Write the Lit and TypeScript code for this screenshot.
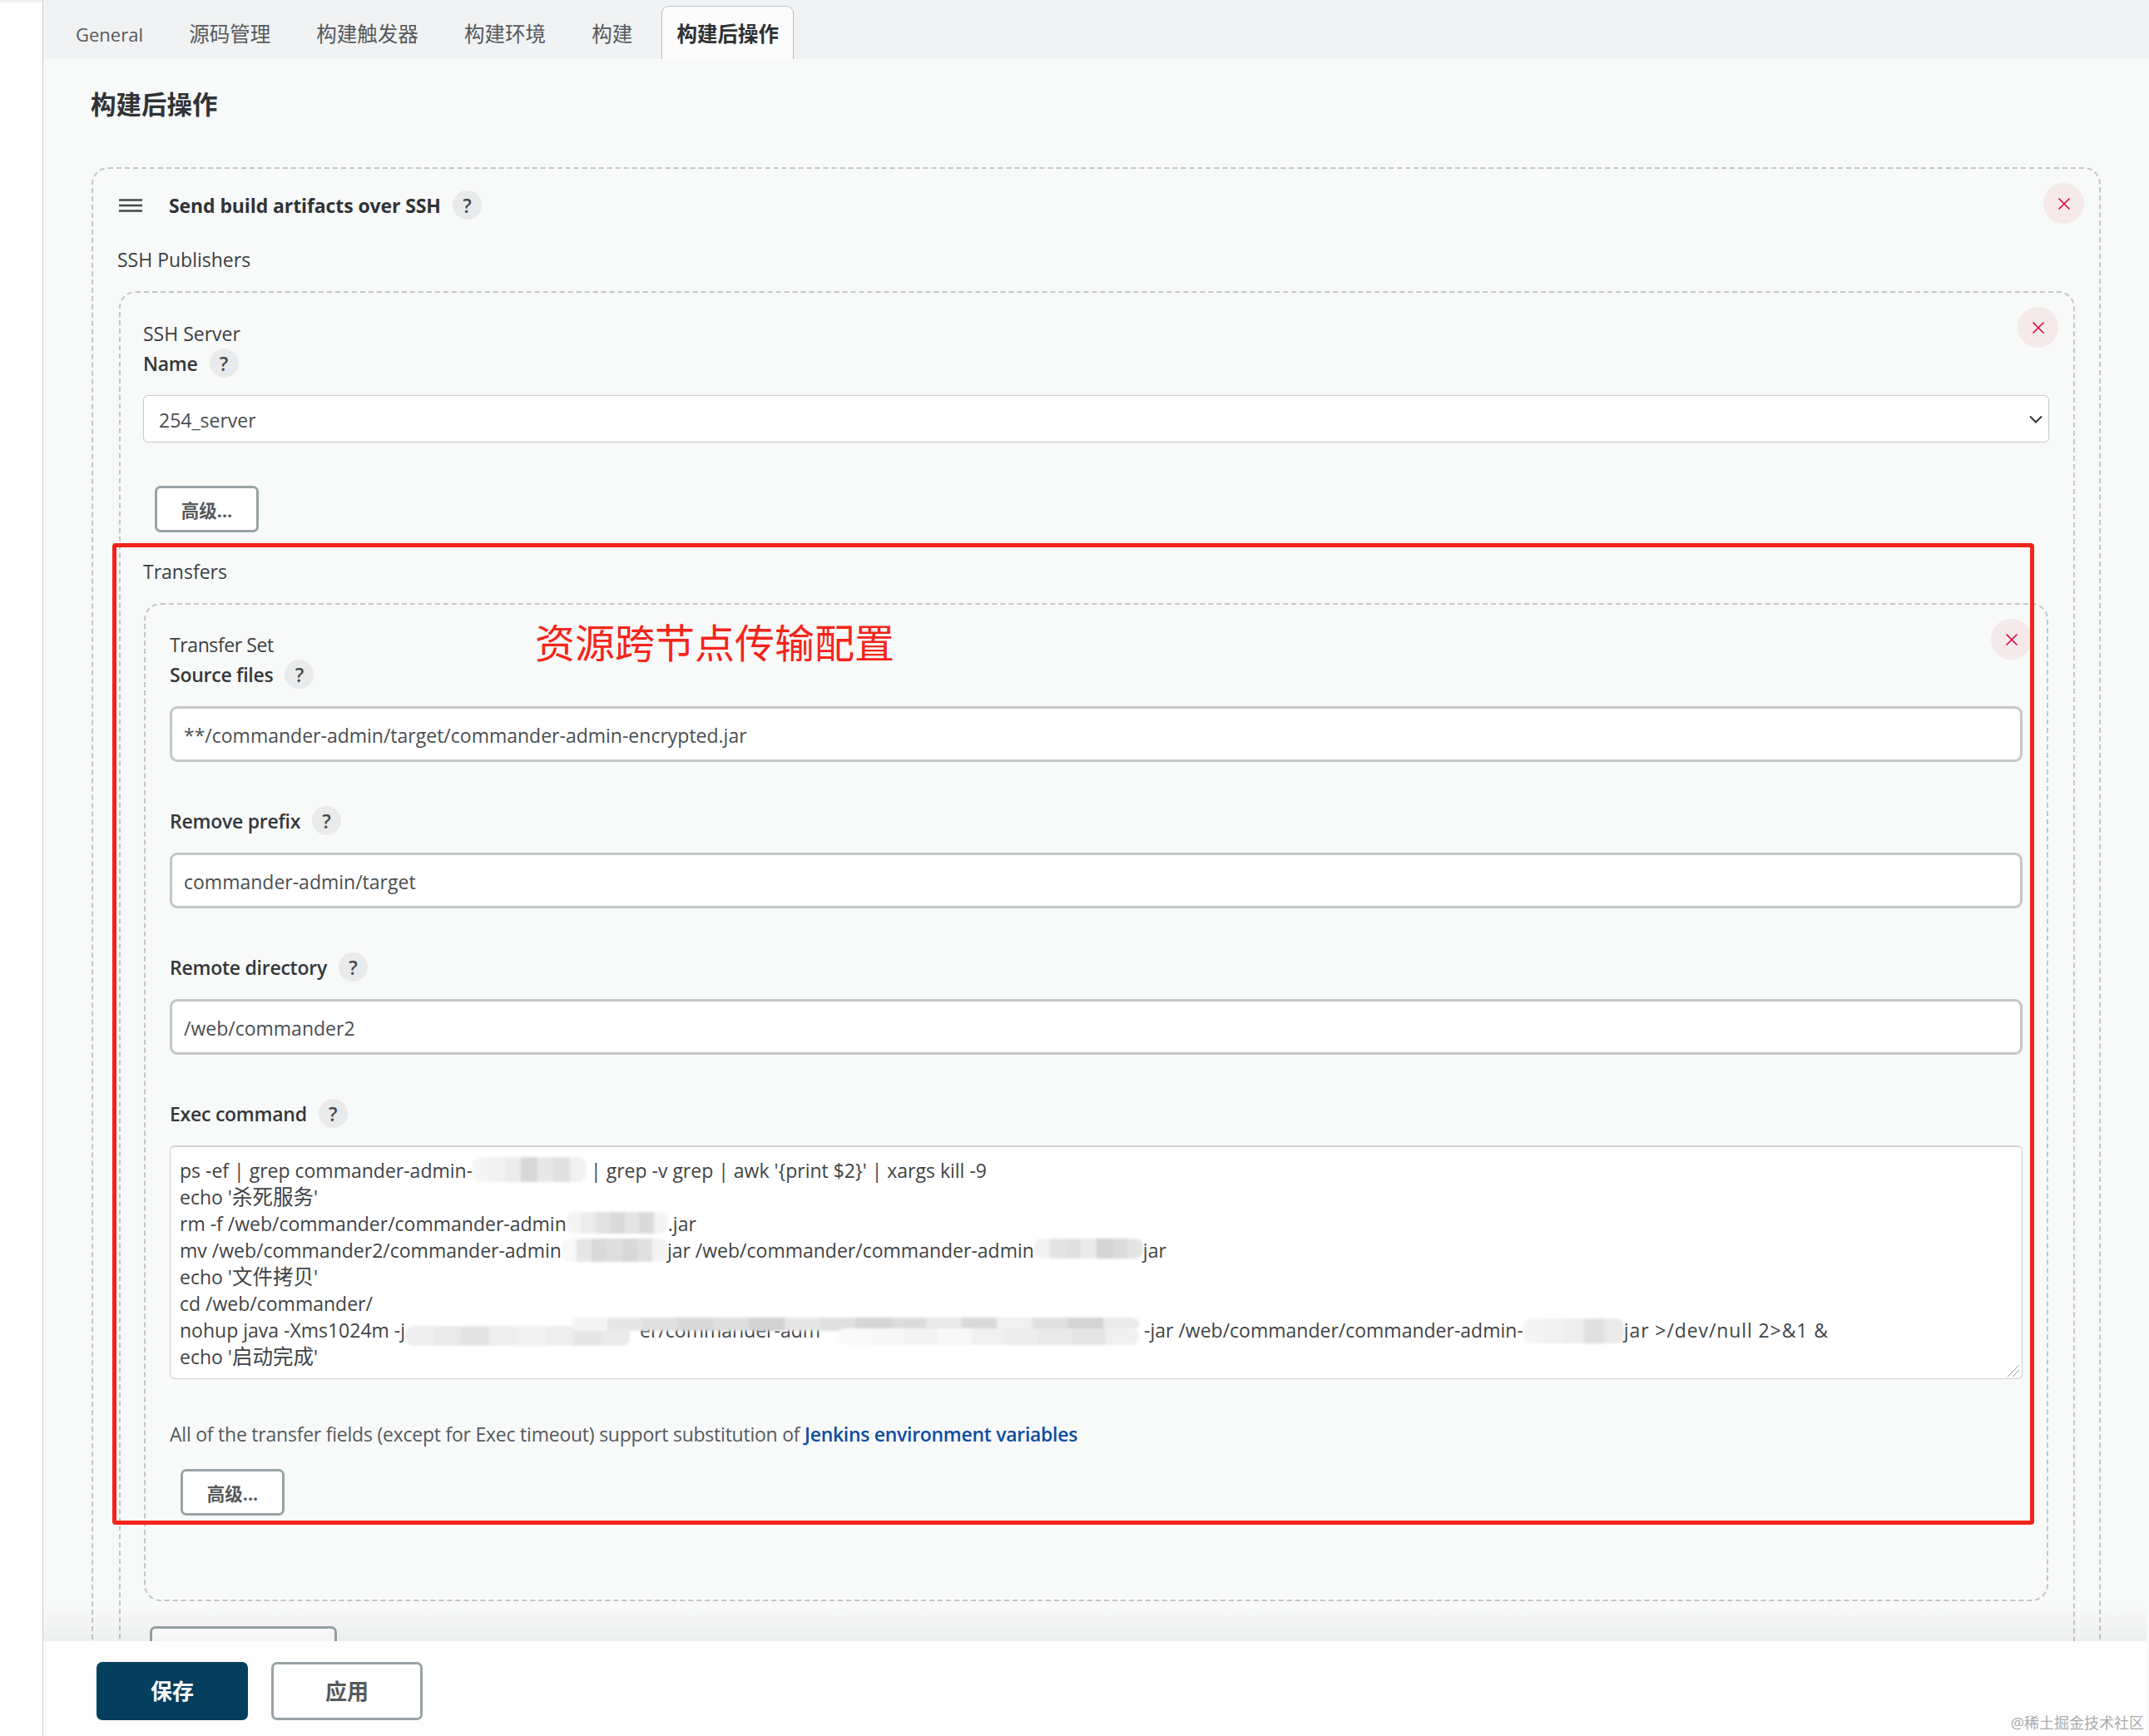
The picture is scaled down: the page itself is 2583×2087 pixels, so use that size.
import { LitElement, html, css } from "lit";
import { customElement } from "lit/decorators.js";

interface Seg { l: number; t: number; w: number; h: number; grays: number[] }
interface Patch { w: number; segs: Seg[]; hint?: string; hintAt?: number }
interface Cjk { cjk: string }
interface Wide { wide: string }
type Part = string | Patch | Cjk | Wide;

const simple = (w: number, grays: number[], t = 0, h = 28): Patch => ({ w, segs: [{ l: 0, t, w, h, grays }] });

const LINES: Part[][] = [
  ["ps -ef | grep commander-admin-", simple(136, [245, 240, 236, 216, 232, 224, 240], -2, 30), " | grep -v grep | awk '{print $2}' | xargs kill -9"],
  ["echo '", { cjk: "杀死服务" }, "'"],
  ["rm -f /web/commander/commander-admin", simple(122, [244, 236, 226, 218, 228, 218, 244], 0, 26), ".jar"],
  ["mv /web/commander2/commander-admin", simple(127, [248, 230, 218, 222, 216, 224, 244], 0, 28), "jar /web/commander/commander-admin", simple(131, [242, 228, 224, 234, 212, 218, 228], 0, 24), "jar"],
  ["echo '", { cjk: "文件拷贝" }, "'"],
  ["cd /web/commander/"],
  [
    "nohup java -Xms1024m -j",
    {
      w: 882,
      hint: "er/commander-adm",
      hintAt: 282,
      segs: [
        { l: 0, t: 9, w: 270, h: 24, grays: [238, 234, 228, 238, 242, 238, 230, 234] },
        { l: 200, t: -1, w: 682, h: 16, grays: [244, 230, 224, 216, 222, 210, 230, 224, 214, 220, 232, 218, 240, 224, 212, 234] },
        { l: 520, t: 12, w: 362, h: 20, grays: [250, 246, 244, 248, 240, 236, 232, 228, 240] },
      ],
    },
    " -jar /web/commander/commander-admin-",
    simple(121, [244, 242, 238, 224, 234], 0, 30),
    { wide: "jar >/dev/null 2>&1 &" },
  ],
  ["echo '", { cjk: "启动完成" }, "'"],
];

@customElement("app-root")
export class AppRoot extends LitElement {
  static styles = css`
    :host {
      display: block;
      width: 2583px;
      height: 2087px;
      position: relative;
      overflow: hidden;
      background: #fff;
      color: #3a3f42;
      font-family: "Open Sans", "Noto Sans CJK SC", sans-serif;
      font-size: 23px;
      line-height: 32px;
    }
    .page { display: flex; height: 2087px; }
    .side { width: 51px; flex: none; border-right: 1px solid #cfd1d2; background: linear-gradient(#eff0f1 3px, #fff 3px); }
    .main { flex: 1; min-width: 0; background: #f8f9f9; overflow: hidden; }
    .tabs { height: 71px; background: #f1f2f3; display: flex; align-items: flex-end; padding-left: 20px; box-sizing: border-box; font-size: 24.5px; }
    .tab { height: 64px; line-height: 66px; padding: 0 18px; margin-right: 17.2px; color: #55595c; box-sizing: border-box; border: 1px solid transparent; border-bottom: 0; }
    .tab.latin { font-size: 22px; }
    .tab.on { background: #fcfcfc; border-color: #b9bfc2; border-radius: 9px 9px 0 0; color: #2e3133; font-weight: 700; padding: 0 17px; margin-left: -1px; }
    .content { padding: 34px 58px 0 57px; }
    h1 { margin: 0; font-size: 30.5px; line-height: 40px; font-weight: 700; color: #303336; }
    .dash { border: 2px dashed #c4c6c8; border-radius: 20px; position: relative; }
    .outer { margin: 56px 0 0 1px; padding: 26px 0 0 29px; }
    .head { display: flex; align-items: center; height: 35px; }
    .grip { width: 28px; height: 16px; margin: 0 32px 0 2px; flex: none; }
    .head b { font-weight: 700; color: #303336; letter-spacing: -0.1px; }
    .q { width: 35px; height: 35px; border-radius: 50%; background: #e9eaeb; flex: none; margin-left: 14px; display: flex; align-items: center; justify-content: center; font-size: 23px; font-weight: 600; color: #44484b; letter-spacing: 0; }
    .txt { line-height: 32px; }
    .tight { letter-spacing: -0.4px; }
    .sec { margin-top: 32px; }
    .server { margin: 22px 29px 0 2px; padding: 33px 29px 0 27px; }
    .row { display: flex; align-items: center; height: 35px; font-weight: 600; color: #33373a; letter-spacing: -0.25px; }
    select { display: block; width: 100%; height: 57px; appearance: none; background: #fff; border: 1px solid #c6c8c9; border-radius: 6px; padding: 2px 18px 0; font: inherit; color: #4a4e51; box-sizing: border-box; }
    .selwrap { position: relative; margin-top: 21px; }
    .chev { position: absolute; right: 8px; top: 24px; width: 16px; height: 10px; pointer-events: none; }
    .btn { display: flex; align-items: center; justify-content: center; width: 125px; height: 56px; box-sizing: border-box; border: 3px solid #98a3a6; border-radius: 7px; background: #fff; font-size: 21.5px; font-weight: 700; color: #55595c; padding-top: 3px; }
    .adv1 { margin: 52px 0 0 14px; }
    .transfers { margin-top: 31px; }
    .set { margin: 22px 1px 0 1px; padding: 32px 29px 101px 29px; }
    .top-row { margin-top: 2px; }
    .field { display: block; width: 100%; height: 67px; margin: 21px 0 53px; padding: 3px 14px 0; box-sizing: border-box; border: 3px solid #c4c7c9; border-radius: 9px; background: #fff; font: inherit; color: #4a4e51; outline: none; }
    .area { margin: 21px 0 0; height: 281px; box-sizing: border-box; background: #fff; border: 1px solid #cfd1d2; border-top: 2px solid #cdd0d1; border-radius: 6px; padding: 12px 11px 0; position: relative; color: #3f4346; }
    .line { height: 32px; white-space: pre; }
    .cjk { font-size: 24.5px; }
    .wide { letter-spacing: 0.9px; }
    .patch { display: inline-block; position: relative; height: 32px; vertical-align: top; }
    .seg { position: absolute; border-radius: 9px; filter: blur(1.5px); }
    .hint { position: absolute; top: 0; }
    .grab { position: absolute; right: 2px; bottom: 1px; width: 16px; height: 16px; }
    .note { margin-top: 50px; color: #55595c; letter-spacing: -0.23px; }
    .note a { color: #0b4ea2; font-weight: 600; letter-spacing: -0.3px; text-decoration: none; }
    .adv2 { margin: 26px 0 0 13px; }
    .add { width: 225px; margin: 30px 0 0 8px; }
    .red { position: absolute; left: 135px; top: 653px; width: 2310px; height: 1180px; box-sizing: border-box; border: 5px solid #f5241a; border-radius: 4px; pointer-events: none; }
    .mark { position: absolute; left: 643px; top: 738px; font-size: 48px; line-height: 70px; color: #f5241a; white-space: nowrap; }
    .del { position: absolute; width: 49px; height: 49px; border-radius: 50%; background: #f5e9ea; display: flex; align-items: center; justify-content: center; }
    .del svg { width: 16px; height: 16px; }
    .del.a { right: 18px; top: 17px; }
    .del.b { right: 18px; top: 17px; }
    .foot { position: absolute; left: 52px; right: 3px; top: 1973px; bottom: 0; background: #fdfdfd; display: flex; gap: 28px; padding: 25px 0 0 64px; box-sizing: border-box; }
    .foot::before { content: ""; position: absolute; left: 0; right: 0; top: -44px; height: 44px; background: linear-gradient(rgba(0, 0, 0, 0), rgba(0, 0, 0, 0.045)); }
    .foot .btn { width: 182px; height: 70px; font-size: 26px; font-weight: 700; padding-top: 0; }
    .foot .save { background: #053f5e; border-color: #053f5e; color: #fff; }
    .wm { position: absolute; right: 6px; top: 2057px; font-size: 18px; line-height: 28px; color: #a9abac; white-space: nowrap; }
  `;

  private x() {
    return html`<svg viewBox="0 0 16 16"><path d="M1.5 1.5l13 13M14.5 1.5l-13 13" stroke="#d9083a" stroke-width="1.6" fill="none" /></svg>`;
  }

  private q() {
    return html`<span class="q">?</span>`;
  }

  private part(p: Part) {
    if (typeof p === "string") return p;
    if ("cjk" in p) return html`<span class="cjk">${p.cjk}</span>`;
    if ("wide" in p) return html`<span class="wide">${p.wide}</span>`;
    return html`<span class="patch" style="width:${p.w}px">
      ${p.hint ? html`<span class="hint" style="left:${p.hintAt}px">${p.hint}</span>` : ""}
      ${p.segs.map((s) => {
        const n = s.grays.length;
        const stops = s.grays
          .map((g, i) => `rgb(${g},${g},${g}) ${(i / n) * 100}% ${((i + 1) / n) * 100}%`)
          .join(",");
        return html`<span class="seg" style="left:${s.l}px;top:${s.t + 2}px;width:${s.w}px;height:${s.h}px;background:linear-gradient(90deg,${stops})"></span>`;
      })}
    </span>`;
  }

  render() {
    return html`
      <div class="page">
        <div class="side"></div>
        <div class="main">
          <div class="tabs">
            <div class="tab latin">General</div>
            ${["源码管理", "构建触发器", "构建环境", "构建"].map((t) => html`<div class="tab">${t}</div>`)}
            <div class="tab on">构建后操作</div>
          </div>
          <div class="content">
            <h1>构建后操作</h1>
            <div class="dash outer">
              <div class="del a">${this.x()}</div>
              <div class="head">
                <svg class="grip" viewBox="0 0 28 16"><path d="M0 1.5h28M0 8h28M0 14.500h28" stroke="#44484b" stroke-width="2.4" /></svg>
                <b>Send build artifacts over SSH</b>${this.q()}
              </div>
              <div class="txt sec">SSH Publishers</div>
              <div class="dash server">
                <div class="del b">${this.x()}</div>
                <div class="txt">SSH Server</div>
                <div class="row" style="margin-top:2px">Name${this.q()}</div>
                <div class="selwrap">
                  <select><option>254_server</option></select>
                  <svg class="chev" viewBox="0 0 16 10"><path d="M1 1.500l7 7 7-7" stroke="#333" stroke-width="2" fill="none" /></svg>
                </div>
                <div class="btn adv1">高级...</div>
                <div class="txt transfers">Transfers</div>
                <div class="dash set">
                  <div class="del b">${this.x()}</div>
                  <div class="txt tight">Transfer Set</div>
                  <div class="row top-row">Source files${this.q()}</div>
                  <input class="field" .value=${"**/commander-admin/target/commander-admin-encrypted.jar"} />
                  <div class="row">Remove prefix${this.q()}</div>
                  <input class="field" .value=${"commander-admin/target"} />
                  <div class="row">Remote directory${this.q()}</div>
                  <input class="field" .value=${"/web/commander2"} />
                  <div class="row">Exec command${this.q()}</div>
                  <div class="area">
                    ${LINES.map((l) => html`<div class="line">${l.map((p) => this.part(p))}</div>`)}
                    <svg class="grab" viewBox="0 0 16 16"><path d="M15 1L1 15M15 7L7 15" stroke="#9a9c9e" stroke-width="1" fill="none" /></svg>
                  </div>
                  <div class="note">All of the transfer fields (except for Exec timeout) support substitution of <a>Jenkins environment variables</a></div>
                  <div class="btn adv2">高级...</div>
                </div>
                <div class="btn add"></div>
              </div>
            </div>
          </div>
        </div>
      </div>
      <div class="red"></div>
      <div class="mark">资源跨节点传输配置</div>
      <div class="foot">
        <div class="btn save">保存</div>
        <div class="btn">应用</div>
      </div>
      <div class="wm">@稀土掘金技术社区</div>
    `;
  }
}
